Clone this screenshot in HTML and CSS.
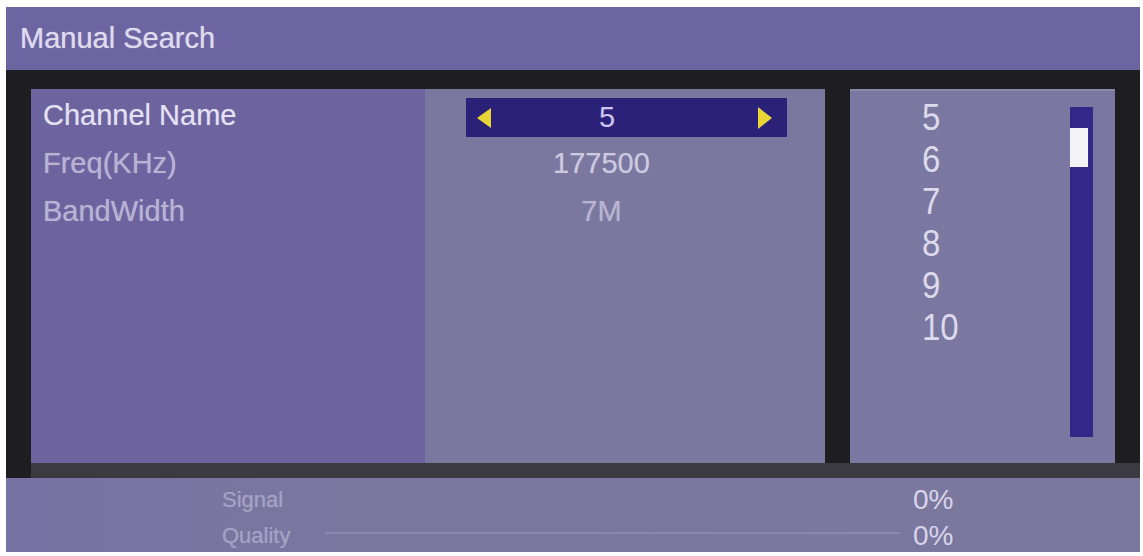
FILE: index.html
```html
<!DOCTYPE html>
<html lang="en">
<head>
<meta charset="utf-8">
<title>Manual Search</title>
<link rel="stylesheet" href="styles.css">
</head>
<body>
<div class="screen">
  <div class="header">Manual Search</div>
  <div class="main">
    <div class="panels">
      <div class="panel-left">
        <div class="label label-active">Channel Name</div>
        <div class="label">Freq(KHz)</div>
        <div class="label">BandWidth</div>
      </div>
      <div class="panel-mid">
        <div class="selector">
          <svg class="arrow" width="16" height="24" viewBox="0 0 16 24"><polygon points="15,2 15,22 1,12" fill="#e8d636"/></svg>
          <span class="sel-value">5</span>
          <svg class="arrow" width="16" height="24" viewBox="0 0 16 24"><polygon points="1,1 1,23 15,12" fill="#e8d636"/></svg>
        </div>
        <div class="value value-freq">177500</div>
        <div class="value value-bw">7M</div>
      </div>
      <div class="panel-right">
        <ul class="list">
          <li>5</li>
          <li>6</li>
          <li>7</li>
          <li>8</li>
          <li>9</li>
          <li>10</li>
        </ul>
        <div class="scrollbar"><div class="thumb"></div></div>
      </div>
    </div>
    <div class="strip"></div>
  </div>
  <div class="status">
    <div class="status-row">
      <span class="s-label">Signal</span>
      <span class="s-bar"></span>
      <span class="s-pct">0%</span>
    </div>
    <div class="status-row">
      <span class="s-label">Quality</span>
      <span class="s-bar s-bar-line"></span>
      <span class="s-pct">0%</span>
    </div>
  </div>
</div>
</body>
</html>
```

FILE: styles.css
```css
* { box-sizing: border-box; }
html, body { margin: 0; padding: 0; background: #ffffff; }
body { font-family: "Liberation Sans", Arial, sans-serif; }

.screen {
  margin: 7px 0 0 6px;
  width: 1134px;
  height: 545px;
  overflow: hidden;
  display: flex;
  flex-direction: column;
}

.header {
  height: 63px;
  flex: none;
  background: #6d65a1;
  color: #dedbee;
  font-size: 29px;
  line-height: 63px;
  padding-left: 14px;
  text-shadow: 0 0 1px rgba(230,228,245,0.7);
}

.main {
  flex: none;
  background: #1e1e20;
  padding: 19px 0 0 25px;
  display: flex;
  flex-direction: column;
}

.panels {
  display: flex;
  height: 374px;
  padding-right: 25px;
}

.panel-left {
  width: 394px;
  background: #6c639f;
  padding: 2px 0 0 12px;
}

.label {
  height: 48px;
  line-height: 48px;
  font-size: 29px;
  color: #b8b3d4;
  text-shadow: 0 0 1px rgba(200,196,225,0.6);
}
.label-active { color: #e4e1f2; }

.panel-mid {
  width: 400px;
  background: #7b78a0;
  padding: 9px 0 0 41px;
}

.selector {
  width: 321px;
  height: 39px;
  background: #2b2179;
  display: flex;
  align-items: center;
  padding: 0 14px 0 10px;
  margin-bottom: 2px;
}
.arrow { flex: none; display: block; }
.sel-value {
  flex: 1;
  text-align: center;
  padding-right: 35px;
  font-size: 29px;
  color: #cbc7ef;
}

.value {
  width: 321px;
  height: 48px;
  line-height: 48px;
  text-align: center;
  padding-right: 50px;
  font-size: 29px;
  text-shadow: 0 0 1px rgba(200,196,225,0.5);
}
.value-freq { color: #cdcae0; }
.value-bw { color: #b8b5d2; }

.panel-right {
  width: 265px;
  margin-left: 25px;
  background: #7a78a0;
  border-top: 2px solid #8a88ab;
  display: flex;
  justify-content: space-between;
}

.list {
  list-style: none;
  margin: 0;
  padding: 6px 0 0 72px;
}
.list li {
  height: 42px;
  line-height: 42px;
  font-size: 33px;
  color: #dcdaec;
  transform: scaleY(1.12);
}

.scrollbar {
  width: 23px;
  height: 330px;
  margin: 16px 22px 0 0;
  background: #33288a;
  padding-top: 21px;
}
.thumb {
  width: 18px;
  height: 39px;
  background: #f3f3f7;
}

.strip {
  height: 15px;
  background: #3a3a40;
}

.status {
  flex: 1;
  background: linear-gradient(90deg, #7572a4 0%, #7a779f 30%, #7b789e 100%);
  padding: 4px 0 0 216px;
}

.status-row {
  display: grid;
  grid-template-columns: 103px 575px 1fr;
  align-items: center;
  height: 36px;
}
.s-label {
  font-size: 22px;
  line-height: 26px;
  color: #a5a2c4;
  text-shadow: 0 0 1px rgba(170,167,200,0.6);
}
.s-bar { height: 2px; }
.s-bar-line {
  background: #8b89ad;
  margin-top: -6px;
}
.s-pct {
  padding-left: 13px;
  font-size: 28px;
  line-height: 30px;
  color: #d8d5ea;
}
```
